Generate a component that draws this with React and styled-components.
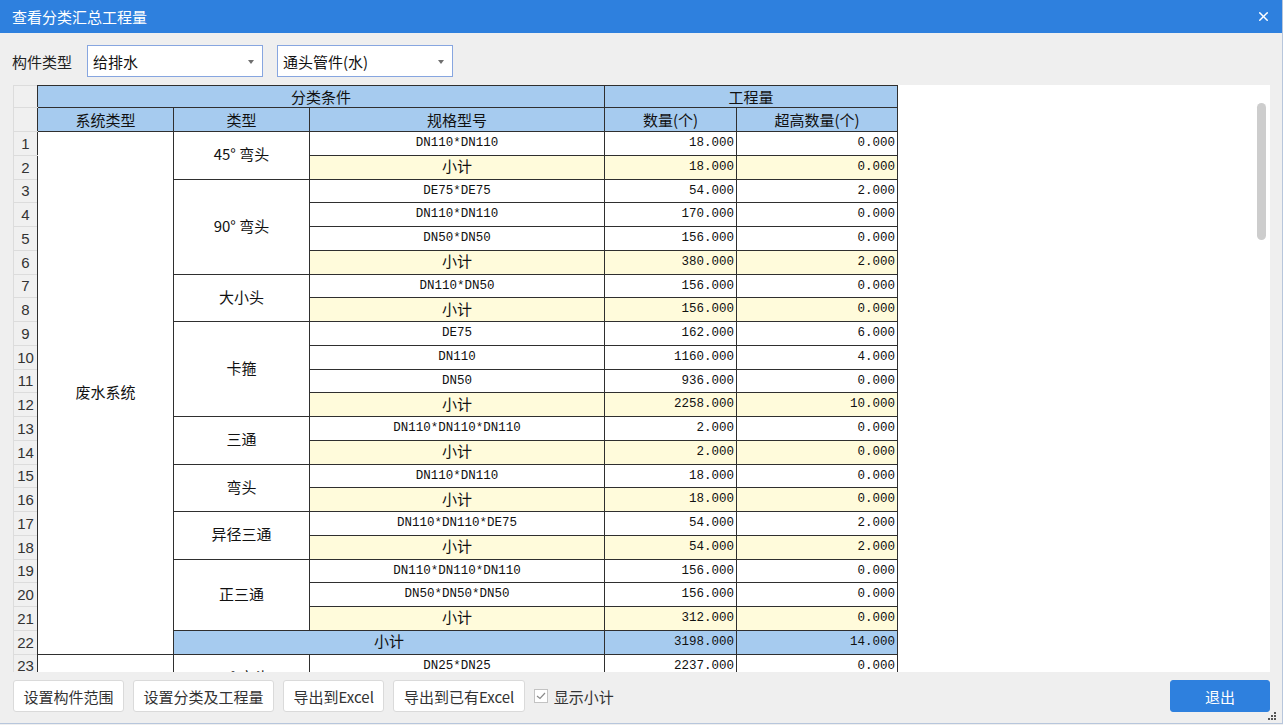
import React from 'react';
import styled, { createGlobalStyle } from 'styled-components';
import { X } from 'lucide-react';

const GlobalStyle = createGlobalStyle`
  html, body {
    margin: 0;
    padding: 0;
    background: #efefef;
  }
  body {
    font-family: "Noto Sans CJK SC", "Noto Sans", sans-serif;
  }
`;

const CJK = '"Noto Sans CJK SC", "Noto Sans", sans-serif';
const MONO = '"Liberation Mono", "DejaVu Sans Mono", monospace';

const HEAD_BG = '#a6cbef';
const SUB_BG = '#fffbdb';
const LINE = '#2f2f2f';

const COLS = [24, 136, 136, 295, 132, 161];

const ROWS = [
  { n: 1, sys: { text: '废水系统', span: 22 }, type: { text: '45° 弯头', span: 2 }, spec: 'DN110*DN110', qty: '18.000', high: '0.000' },
  { n: 2, spec: '小计', qty: '18.000', high: '0.000', sub: true },
  { n: 3, type: { text: '90° 弯头', span: 4 }, spec: 'DE75*DE75', qty: '54.000', high: '2.000' },
  { n: 4, spec: 'DN110*DN110', qty: '170.000', high: '0.000' },
  { n: 5, spec: 'DN50*DN50', qty: '156.000', high: '0.000' },
  { n: 6, spec: '小计', qty: '380.000', high: '2.000', sub: true },
  { n: 7, type: { text: '大小头', span: 2 }, spec: 'DN110*DN50', qty: '156.000', high: '0.000' },
  { n: 8, spec: '小计', qty: '156.000', high: '0.000', sub: true },
  { n: 9, type: { text: '卡箍', span: 4 }, spec: 'DE75', qty: '162.000', high: '6.000' },
  { n: 10, spec: 'DN110', qty: '1160.000', high: '4.000' },
  { n: 11, spec: 'DN50', qty: '936.000', high: '0.000' },
  { n: 12, spec: '小计', qty: '2258.000', high: '10.000', sub: true },
  { n: 13, type: { text: '三通', span: 2 }, spec: 'DN110*DN110*DN110', qty: '2.000', high: '0.000' },
  { n: 14, spec: '小计', qty: '2.000', high: '0.000', sub: true },
  { n: 15, type: { text: '弯头', span: 2 }, spec: 'DN110*DN110', qty: '18.000', high: '0.000' },
  { n: 16, spec: '小计', qty: '18.000', high: '0.000', sub: true },
  { n: 17, type: { text: '异径三通', span: 2 }, spec: 'DN110*DN110*DE75', qty: '54.000', high: '2.000' },
  { n: 18, spec: '小计', qty: '54.000', high: '2.000', sub: true },
  { n: 19, type: { text: '正三通', span: 3 }, spec: 'DN110*DN110*DN110', qty: '156.000', high: '0.000' },
  { n: 20, spec: 'DN50*DN50*DN50', qty: '156.000', high: '0.000' },
  { n: 21, spec: '小计', qty: '312.000', high: '0.000', sub: true },
  { n: 22, total: true, qty: '3198.000', high: '14.000' },
  { n: 23, sys: { text: '', span: 2 }, type: { text: '90° 弯头', span: 2 }, spec: 'DN25*DN25', qty: '2237.000', high: '0.000' },
  { n: 24, spec: '小计', qty: '2237.000', high: '0.000', sub: true },
];

const Window = styled.div`
  position: relative;
  width: 1282px;
  height: 723px;
  display: flex;
  flex-direction: column;
  background: #efefef;
  border-right: 1px solid #b7c6dc;
  border-bottom: 1px solid #b7c6dc;
`;

const TitleBar = styled.div`
  height: 33px;
  flex: none;
  display: flex;
  align-items: center;
  justify-content: space-between;
  padding: 0 11px 0 12px;
  background: #2e80de;
  color: #fff;
`;

const Title = styled.div`
  font-family: ${CJK};
  font-size: 15px;
  line-height: 1;
`;

const CloseButton = styled.div`
  display: flex;
  align-items: center;
  color: #fff;
`;

const Body = styled.div`
  flex: 1;
  display: flex;
  flex-direction: column;
  padding: 12px 12px 11px 13px;
  min-height: 0;
`;

const FilterRow = styled.div`
  display: flex;
  align-items: center;
  height: 32px;
  gap: 14px;
`;

const Label = styled.div`
  font-family: ${CJK};
  font-size: 15px;
  color: #222;
  margin-left: -1px;
  margin-right: 1px;
  width: 60px;
`;

const Select = styled.div`
  position: relative;
  box-sizing: border-box;
  width: ${(p) => p.$w}px;
  height: 32px;
  display: flex;
  align-items: center;
  padding-left: 5px;
  background: #fff;
  border: 1px solid #87a6e0;
  font-family: ${CJK};
  font-size: 15px;
  color: #111;

  &::after {
    content: '';
    position: absolute;
    right: 8px;
    top: 14px;
    border-left: 3.5px solid transparent;
    border-right: 3.5px solid transparent;
    border-top: 4px solid #6f6f6f;
  }
`;

const GridArea = styled.div`
  position: relative;
  margin-top: 8px;
  height: 587px;
  flex: none;
  background: #fff;
  overflow: hidden;
`;

const ScrollThumb = styled.div`
  position: absolute;
  right: 4px;
  top: 18px;
  width: 9px;
  height: 137px;
  border-radius: 5px;
  background: #cdcdcd;
`;

const Table = styled.table`
  border-collapse: collapse;
  table-layout: fixed;
  width: ${COLS.reduce((a, b) => a + b, 0)}px;
`;

const Col = styled.col`
  width: ${(p) => p.$w}px;
`;

const Row = styled.tr`
  height: ${(p) => p.$h}px;
`;

const RowNum = styled.td`
  padding: 0;
  background: #f0f0f0;
  border: 1px solid #dcdcdc;
  border-right: 1px solid ${LINE};
  font-family: "Liberation Sans", "Noto Sans", sans-serif;
  font-size: 15px;
  color: #333;
  text-align: center;
  vertical-align: middle;
  line-height: 1;
`;

const Head = styled.th`
  padding: 0 0 1px;
  background: ${HEAD_BG};
  border: 1px solid ${LINE};
  font-family: ${CJK};
  font-size: 15px;
  font-weight: normal;
  color: #111;
  text-align: center;
  vertical-align: middle;
  line-height: 1;
  white-space: nowrap;
`;

const Cell = styled.td`
  padding: 0 ${(p) => (p.$num ? '2px' : '3px')} ${(p) => (p.$mono ? '0' : '3px')} 3px;
  background: ${(p) => (p.$total ? HEAD_BG : p.$sub ? SUB_BG : '#fff')};
  border: 1px solid ${LINE};
  font-family: ${(p) => (p.$mono ? MONO : CJK)};
  font-size: ${(p) => (p.$mono ? '12.5px' : '15px')};
  color: #111;
  text-align: ${(p) => (p.$num ? 'right' : 'center')};
  vertical-align: middle;
  line-height: 1;
  white-space: nowrap;
  overflow: hidden;
`;

const Footer = styled.div`
  display: flex;
  align-items: center;
  margin-top: 8px;
  height: 32px;
  gap: 9px;
`;

const Button = styled.button`
  box-sizing: border-box;
  height: 32px;
  padding: 0 9.5px;
  background: #fff;
  border: 1px solid #dadada;
  border-radius: 3px;
  font-family: ${CJK};
  font-size: 15px;
  color: #333;
  cursor: pointer;
`;

const PrimaryButton = styled(Button)`
  width: 100px;
  margin-left: auto;
  background: #2e80de;
  border-color: #2e80de;
  color: #fff;
`;

const CheckLabel = styled.label`
  display: flex;
  align-items: center;
  gap: 6px;
  font-family: ${CJK};
  font-size: 15px;
  color: #333;
`;

const CheckBox = styled.span`
  box-sizing: border-box;
  width: 14px;
  height: 14px;
  display: flex;
  align-items: center;
  justify-content: center;
  background: #fff;
  border: 1px solid #c3c3c3;
`;

const Grip = styled.svg`
  position: absolute;
  right: 5px;
  bottom: 2px;
`;

function GridTable() {
  return (
    <Table>
      <colgroup>
        {COLS.map((w, i) => (
          <Col key={i} $w={w} />
        ))}
      </colgroup>
      <thead>
        <Row $h={22}>
          <RowNum />
          <Head colSpan={3}>分类条件</Head>
          <Head colSpan={2}>工程量</Head>
        </Row>
        <Row $h={24}>
          <RowNum />
          <Head>系统类型</Head>
          <Head>类型</Head>
          <Head>规格型号</Head>
          <Head>数量(个)</Head>
          <Head>超高数量(个)</Head>
        </Row>
      </thead>
      <tbody>
        {ROWS.map((r) => (
          <Row key={r.n} $h={23.76}>
            <RowNum>{r.n}</RowNum>
            {r.sys && <Cell rowSpan={r.sys.span}>{r.sys.text}</Cell>}
            {r.total ? (
              <Cell colSpan={2} $total>
                小计
              </Cell>
            ) : (
              <>
                {r.type && <Cell rowSpan={r.type.span}>{r.type.text}</Cell>}
                <Cell $sub={r.sub} $mono={!r.sub}>
                  {r.spec}
                </Cell>
              </>
            )}
            <Cell $num $mono $sub={r.sub} $total={r.total}>
              {r.qty}
            </Cell>
            <Cell $num $mono $sub={r.sub} $total={r.total}>
              {r.high}
            </Cell>
          </Row>
        ))}
      </tbody>
    </Table>
  );
}

export default function App() {
  return (
    <>
      <GlobalStyle />
      <Window>
        <TitleBar>
          <Title>查看分类汇总工程量</Title>
          <CloseButton>
            <X size={15} strokeWidth={2.4} />
          </CloseButton>
        </TitleBar>
        <Body>
          <FilterRow>
            <Label>构件类型</Label>
            <Select $w={176}>给排水</Select>
            <Select $w={176}>通头管件(水)</Select>
          </FilterRow>
          <GridArea>
            <GridTable />
            <ScrollThumb />
          </GridArea>
          <Footer>
            <Button>设置构件范围</Button>
            <Button>设置分类及工程量</Button>
            <Button>导出到Excel</Button>
            <Button>导出到已有Excel</Button>
            <CheckLabel>
              <CheckBox>
                <svg width="10" height="8" viewBox="0 0 10 8">
                  <path d="M1 4 L4 6.5 L9 1" fill="none" stroke="#8a8a8a" strokeWidth="1.2" />
                </svg>
              </CheckBox>
              显示小计
            </CheckLabel>
            <PrimaryButton>退出</PrimaryButton>
          </Footer>
        </Body>
        <Grip width="9" height="9" viewBox="0 0 9 9">
          <rect x="6" y="0" width="2" height="2" fill="#555" />
          <rect x="3" y="3" width="2" height="2" fill="#555" />
          <rect x="6" y="3" width="2" height="2" fill="#555" />
          <rect x="0" y="6" width="2" height="2" fill="#555" />
          <rect x="3" y="6" width="2" height="2" fill="#555" />
          <rect x="6" y="6" width="2" height="2" fill="#555" />
        </Grip>
      </Window>
    </>
  );
}
